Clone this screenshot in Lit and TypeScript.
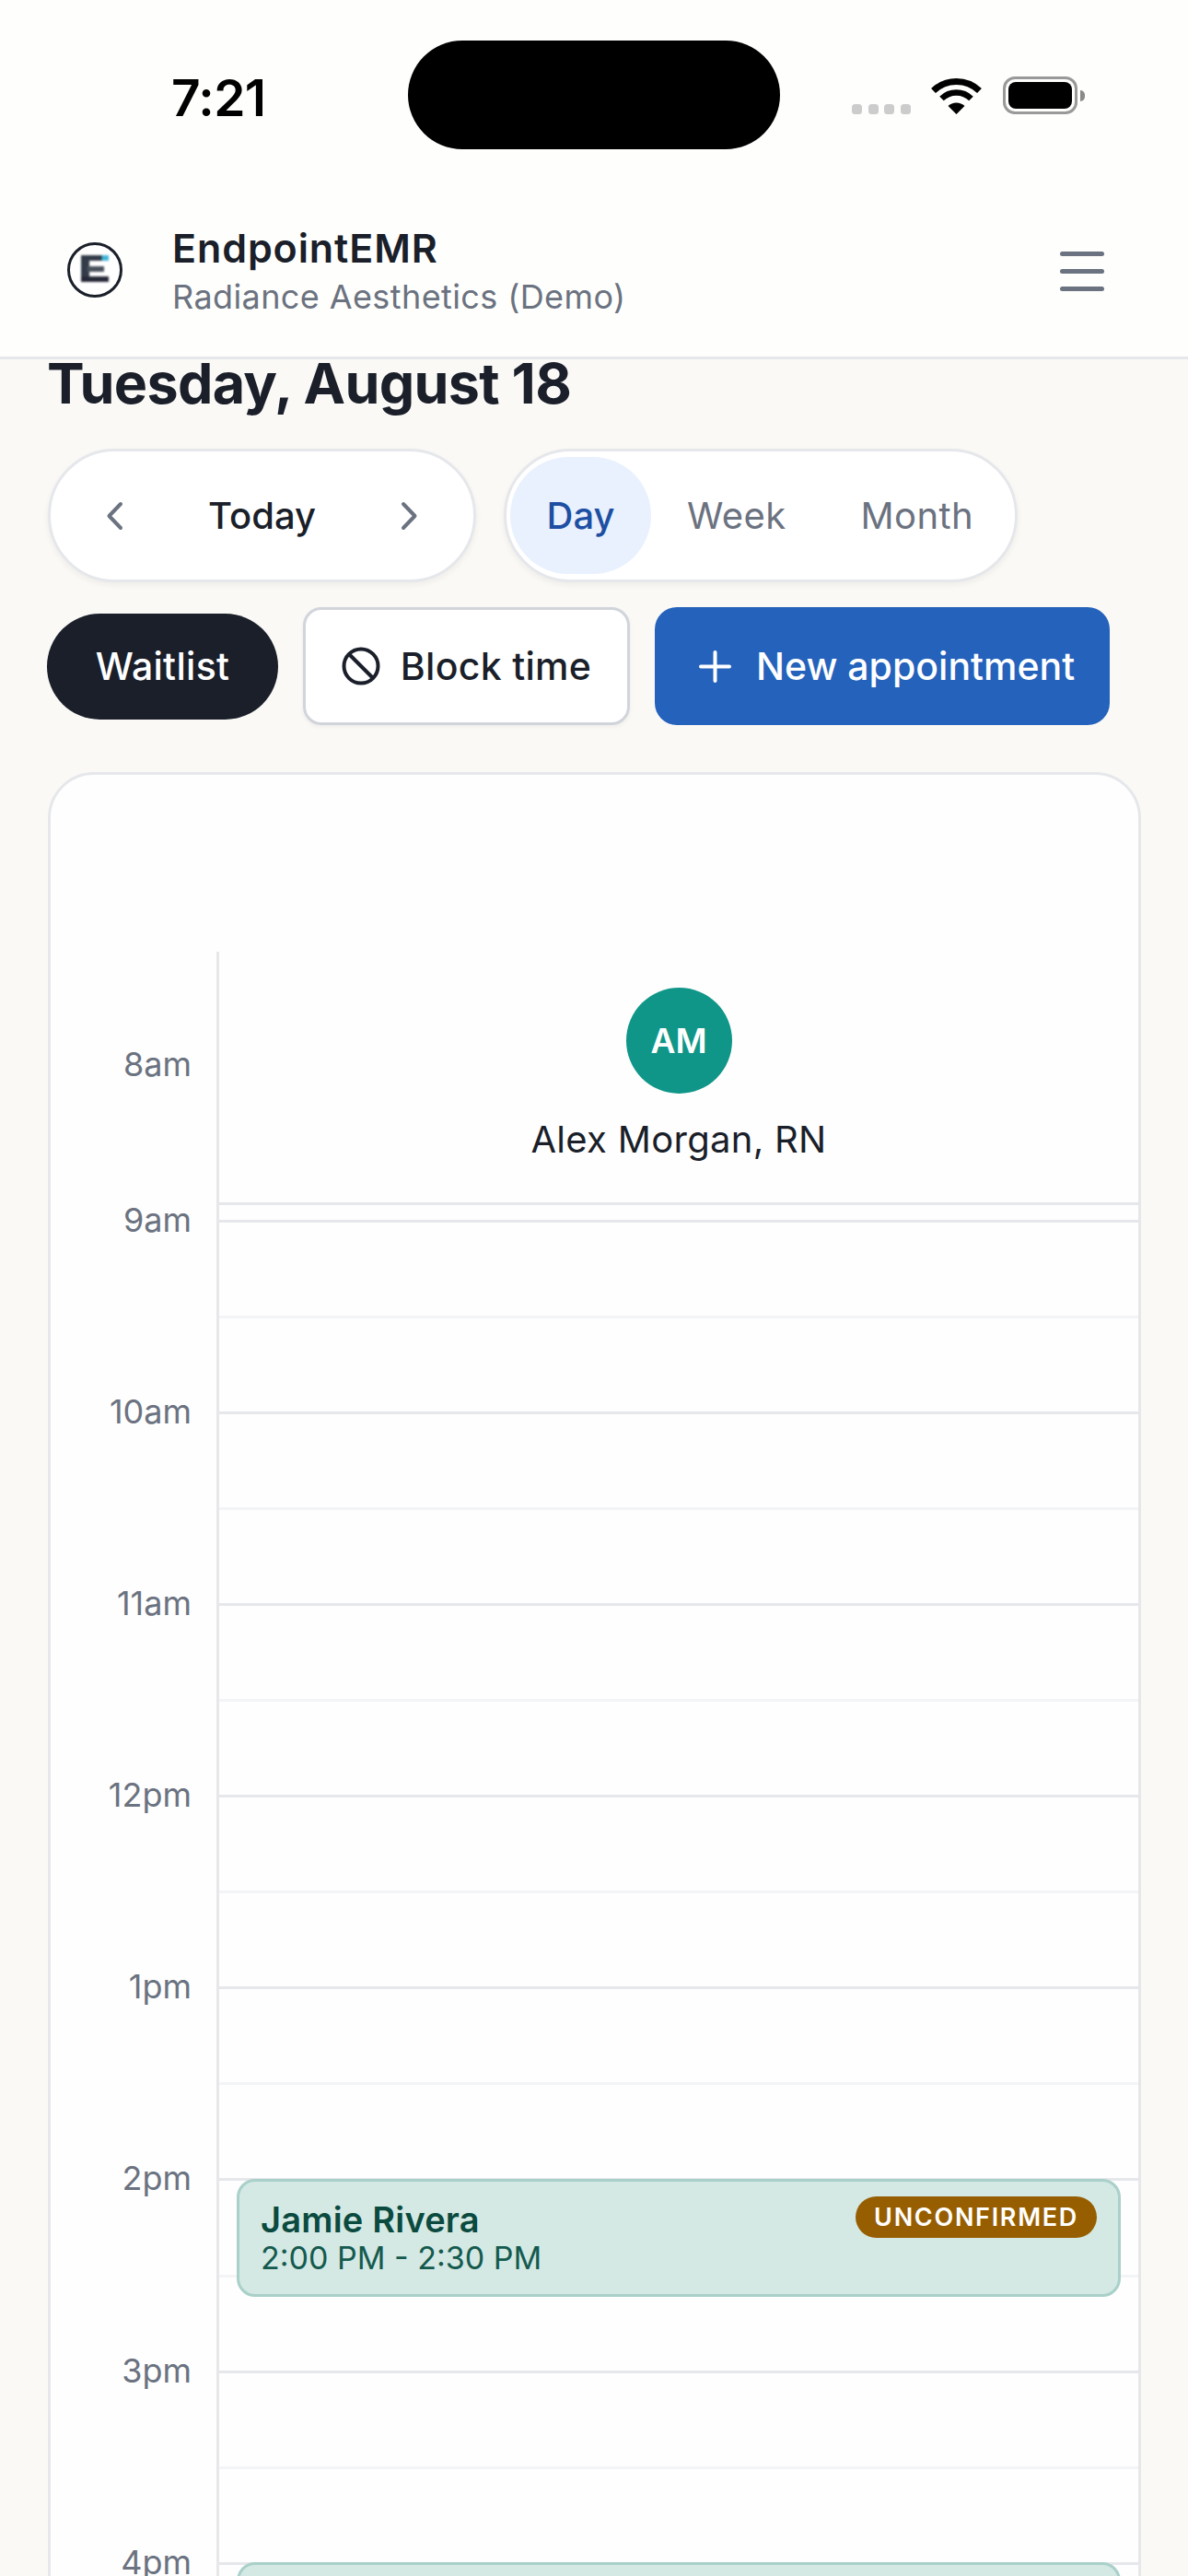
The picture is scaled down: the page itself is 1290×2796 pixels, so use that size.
import { LitElement, html, css, svg } from 'lit';
import { customElement } from 'lit/decorators.js';

const HOUR = 208.1;
const HOURS = ['9am', '10am', '11am', '12pm', '1pm', '2pm', '3pm', '4pm'];

// start is in hours after 9am; the 4pm one runs off the bottom of the screen
const EVENTS = [
  { name: 'Jamie Rivera', time: '2:00 PM - 2:30 PM', start: 5, badge: 'UNCONFIRMED' },
  { name: '', time: '', start: 7, badge: '' },
];

const chevron = (d: string) => html`<svg class="chev" viewBox="0 0 20 32" fill="none" stroke="#6b7280" stroke-width="4" stroke-linecap="round" stroke-linejoin="round"><path d=${d}></path></svg>`;

@customElement('app-root')
export class AppRoot extends LitElement {
  static styles = css`
    :host {
      display: block;
      width: 1290px;
      height: 2796px;
      overflow: hidden;
      background: #faf9f6;
      font-family: Inter, "Liberation Sans", sans-serif;
      color: #1a1f2a;
    }

    .top {
      height: 387px;
      background: #fefefc;
      border-bottom: 3px solid #e5e7eb;
      box-sizing: content-box;
    }

    /* status bar */
    .status {
      height: 206px;
      padding-top: 44px;
      box-sizing: border-box;
      display: flex;
      align-items: flex-start;
    }
    .clock {
      width: 100px;
      margin: 30px 0 0 186px;
      font-size: 55px;
      line-height: 64px;
      font-weight: 600;
      color: #000;
      letter-spacing: -0.6px;
      white-space: nowrap;
    }
    .island {
      width: 404px;
      height: 118px;
      margin-left: 157px;
      border-radius: 59px;
      background: #000;
    }
    .dots {
      display: flex;
      gap: 6.5px;
      margin: 69px 0 0 78px;
    }
    .dots span {
      width: 11px;
      height: 11px;
      border-radius: 3.5px;
      background: #cccccc;
    }
    .wifi {
      width: 55px;
      height: 41px;
      margin: 39px 0 0 22px;
    }
    .battery {
      width: 81px;
      height: 41px;
      margin: 39px 0 0 23px;
      box-sizing: border-box;
      border: 3px solid #999;
      border-radius: 13px;
      padding: 3px;
      position: relative;
    }
    .battery i {
      display: block;
      height: 100%;
      border-radius: 8px;
      background: #000;
    }
    .battery b {
      position: absolute;
      right: -11px;
      top: 12px;
      width: 5px;
      height: 12px;
      border-radius: 0 5px 5px 0;
      background: #8a8a8a;
    }

    /* app header */
    .brand {
      display: flex;
      align-items: center;
      padding: 0 91px 0 73px;
      height: 181px;
    }
    .logo {
      width: 60px;
      height: 60px;
      flex: none;
      margin-bottom: 7px;
    }
    .names {
      margin-left: 54px;
      flex: 1;
      padding-bottom: 5px;
    }
    .name {
      font-size: 43px;
      line-height: 50px;
      font-weight: 600;
      letter-spacing: 0.9px;
      margin-bottom: 5px;
    }
    .clinic {
      font-size: 36px;
      line-height: 46px;
      letter-spacing: 0.4px;
      color: #6b7280;
    }
    .menu {
      display: flex;
      flex-direction: column;
      gap: 14px;
      width: 48px;
      margin-bottom: 4px;
    }
    .menu span {
      height: 5px;
      border-radius: 3px;
      background: #6b7280;
    }

    /* toolbar */
    .main {
      padding: 0 51px 0 52px;
    }
    h1 {
      margin: -9px 0 0 -1px;
      font-size: 61px;
      line-height: 70px;
      font-weight: 700;
      letter-spacing: -0.7px;
      height: 106px;
    }
    .controls {
      display: flex;
      gap: 30px;
    }
    .pill {
      height: 145px;
      box-sizing: border-box;
      border: 3px solid #e5e7eb;
      border-radius: 73px;
      background: #fff;
      box-shadow: 0 3px 6px rgba(26, 31, 42, 0.06);
      display: flex;
      align-items: center;
      font-size: 40px;
      font-weight: 500;
    }
    .nav {
      width: 465px;
      justify-content: space-between;
      padding: 0 59px 0 59px;
    }
    .chev {
      width: 20px;
      height: 32px;
    }
    .views {
      width: 558px;
      padding: 0 4px;
      color: #6b7280;
      font-weight: 400;
      letter-spacing: 0.4px;
    }
    .views span {
      padding: 0 40px 0 39px;
      white-space: nowrap;
    }
    .views .on {
      height: 127px;
      width: 153px;
      box-sizing: border-box;
      display: flex;
      align-items: center;
      justify-content: center;
      padding: 0;
      border-radius: 64px;
      background: #e8f1fd;
      color: #1e4fa3;
      font-weight: 500;
      letter-spacing: 0;
    }
    .views .month {
      padding: 0 0 0 41px;
    }

    .actions {
      display: flex;
      align-items: center;
      margin-top: 27px;
      height: 128px;
      font-size: 41px;
      font-weight: 500;
      letter-spacing: 0.3px;
    }
    .btn {
      display: flex;
      align-items: center;
      justify-content: center;
      box-sizing: border-box;
      white-space: nowrap;
    }
    .waitlist {
      width: 251px;
      height: 115px;
      margin-left: -1px;
      border-radius: 58px;
      background: #1a1f2a;
      color: #fff;
    }
    .block {
      width: 355px;
      height: 128px;
      margin-left: 27px;
      gap: 22px;
      border: 3px solid #d1d5db;
      border-radius: 20px;
      background: #fff;
      box-shadow: 0 2px 4px rgba(26, 31, 42, 0.06);
    }
    .block svg {
      width: 42px;
      height: 42px;
    }
    .new {
      width: 494px;
      height: 128px;
      margin-left: 27px;
      padding-left: 48px;
      justify-content: flex-start;
      gap: 27px;
      border-radius: 24px;
      background: #2462bb;
      color: #fff;
      letter-spacing: 0;
    }
    .new svg {
      width: 35px;
      height: 35px;
    }

    /* calendar */
    .card {
      margin-top: 51px;
      width: 1187px;
      height: 2200px;
      box-sizing: border-box;
      border: 3px solid #e5e7eb;
      border-radius: 50px;
      background: #fefefe;
      padding-top: 192px;
      overflow: hidden;
    }
    .sheet {
      display: grid;
      grid-template-columns: 180px 1fr;
      grid-template-rows: 291px auto;
    }
    .corner {
      padding: 102px 27px 0 0;
      box-sizing: border-box;
    }
    .time {
      font-size: 36px;
      color: #6b7280;
      text-align: right;
      line-height: 40px;
    }
    .staff {
      border-left: 3px solid #e5e7eb;
      height: 291px;
      box-sizing: border-box;
      padding-bottom: 16px;
    }
    .staff-in {
      height: 275px;
      box-sizing: border-box;
      border-bottom: 3px solid #e5e7eb;
      padding-top: 39px;
      display: flex;
      flex-direction: column;
      align-items: center;
    }
    .avatar {
      width: 115px;
      height: 115px;
      border-radius: 50%;
      background: #0f9688;
      color: #fff;
      display: flex;
      align-items: center;
      justify-content: center;
      font-size: 37px;
      font-weight: 600;
    }
    .staff-name {
      margin-top: 26px;
      font-size: 40px;
      line-height: 48px;
      font-weight: 400;
      letter-spacing: 0.3px;
    }
    .times {
      margin-top: -104px;
      padding-right: 27px;
    }
    .times .time {
      line-height: 208.1px;
      height: 208.1px;
    }
    .day {
      position: relative;
      border-left: 3px solid #e5e7eb;
    }
    .half {
      box-sizing: border-box;
      height: 104.05px;
      border-top: 3px solid #f3f4f6;
    }
    .half.hour {
      border-top-color: #e5e7eb;
    }
    .event {
      position: absolute;
      left: 19px;
      right: 19px;
      height: 128px;
      box-sizing: border-box;
      border: 3px solid #a9d0c9;
      border-radius: 20px;
      background: #d4e8e4;
      padding: 19px 24px 0 23px;
      color: #0b4a3f;
    }
    .event-name {
      font-size: 38px;
      line-height: 44px;
      font-weight: 600;
      letter-spacing: 0.2px;
    }
    .event-time {
      font-size: 34px;
      line-height: 40px;
      color: #145a4e;
    }
    .badge {
      position: absolute;
      top: 16px;
      right: 23px;
      height: 45px;
      padding: 0 20px;
      border-radius: 23px;
      background: #975e00;
      color: #fff;
      font-size: 27px;
      line-height: 45px;
      font-weight: 600;
      letter-spacing: 1.7px;
    }
  `;

  private logo() {
    return svg`<svg class="logo" viewBox="0 0 60 60">
      <defs>
        <filter id="soft" x="-20%" y="-20%" width="140%" height="140%"><feGaussianBlur stdDeviation="1.3"></feGaussianBlur></filter>
      </defs>
      <circle cx="30" cy="30" r="28.5" fill="#fff" stroke="#1a1f2a" stroke-width="3"></circle>
      <g filter="url(#soft)">
        <rect x="15" y="14" width="9" height="29" fill="#333a46"></rect>
        <rect x="15" y="14" width="24" height="6" fill="#333a46"></rect>
        <rect x="38" y="14" width="7" height="6" fill="#3fb6d8"></rect>
        <rect x="22" y="26" width="18" height="6" fill="#4a515c"></rect>
        <rect x="15" y="37" width="30" height="6" fill="#262c37"></rect>
      </g>
    </svg>`;
  }

  render() {
    const rows = HOURS.flatMap(() => [0, 1]);
    return html`
      <div class="top">
        <div class="status">
          <div class="clock">7:21</div>
          <div class="island"></div>
          <div class="dots"><span></span><span></span><span></span><span></span></div>
          <svg class="wifi" viewBox="0 0 55 41" fill="none" stroke="#000">
            <path d="M2.5 15.5 A36 36 0 0 1 52.5 15.5" stroke-width="7"></path>
            <path d="M11.5 24 A23 23 0 0 1 43.5 24" stroke-width="6.5"></path>
            <path d="M27.5 41 L18.5 32 A13 13 0 0 1 36.5 32 Z" fill="#000" stroke="none"></path>
          </svg>
          <div class="battery"><i></i><b></b></div>
        </div>
        <div class="brand">
          ${this.logo()}
          <div class="names">
            <div class="name">EndpointEMR</div>
            <div class="clinic">Radiance Aesthetics (Demo)</div>
          </div>
          <div class="menu"><span></span><span></span><span></span></div>
        </div>
      </div>

      <div class="main">
        <h1>Tuesday, August 18</h1>
        <div class="controls">
          <div class="pill nav">
            ${chevron('M17 3 L4.5 16 L17 29')}
            <span>Today</span>
            ${chevron('M3 3 L15.5 16 L3 29')}
          </div>
          <div class="pill views">
            <span class="on">Day</span>
            <span>Week</span>
            <span class="month">Month</span>
          </div>
        </div>
        <div class="actions">
          <div class="btn waitlist">Waitlist</div>
          <div class="btn block">
            <svg viewBox="0 0 42 42" fill="none" stroke="#1a1f2a" stroke-width="4">
              <circle cx="21" cy="21" r="18.5"></circle>
              <path d="M8 8 L34 34"></path>
            </svg>
            Block time
          </div>
          <div class="btn new">
            <svg viewBox="0 0 35 35" fill="none" stroke="#fff" stroke-width="4" stroke-linecap="round">
              <path d="M17.5 2 V33 M2 17.5 H33"></path>
            </svg>
            New appointment
          </div>
        </div>

        <div class="card">
          <div class="sheet">
            <div class="corner"><div class="time">8am</div></div>
            <div class="staff">
              <div class="staff-in">
                <div class="avatar">AM</div>
                <div class="staff-name">Alex Morgan, RN</div>
              </div>
            </div>
            <div class="times">
              ${HOURS.map((h) => html`<div class="time">${h}</div>`)}
            </div>
            <div class="day">
              ${rows.map((r) => html`<div class="half ${r === 0 ? 'hour' : ''}"></div>`)}
              ${EVENTS.map((e) => html`
                <div class="event" style="top:${e.start * HOUR}px">
                  ${e.name ? html`
                    <div class="event-name">${e.name}</div>
                    <div class="event-time">${e.time}</div>
                  ` : ''}
                  ${e.badge ? html`<div class="badge">${e.badge}</div>` : ''}
                </div>
              `)}
            </div>
          </div>
        </div>
      </div>
    `;
  }
}
